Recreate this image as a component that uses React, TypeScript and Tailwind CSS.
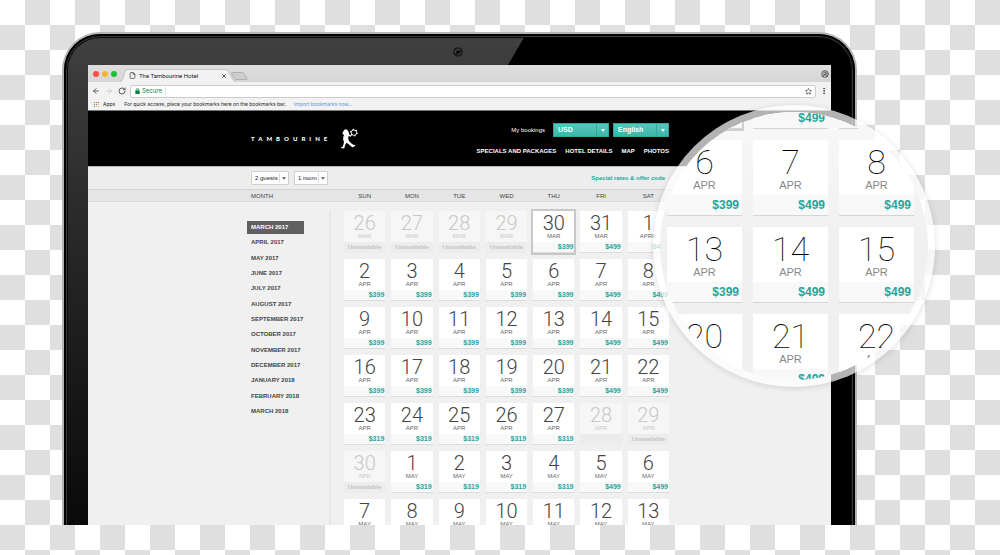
import { ArrowLeft, ArrowRight, CircleUserRound, EllipsisVertical, File, RotateCw, Star, X } from "lucide-react";

type Day = { n?: number; m?: string; price?: string; off?: boolean; selected?: boolean };

const months = [
  "MARCH 2017", "APRIL 2017", "MAY 2017", "JUNE 2017", "JULY 2017", "AUGUST 2017", "SEPTEMBER 2017",
  "OCTOBER 2017", "NOVEMBER 2017", "DECEMBER 2017", "JANUARY 2018", "FEBRUARY 2018", "MARCH 2018",
];

const weekdays = ["SUN", "MON", "TUE", "WED", "THU", "FRI", "SAT"];

const range = (from: number, to: number, make: (n: number) => Day): Day[] =>
  Array.from({ length: to - from + 1 }, (_, i) => make(from + i));

const days: Day[] = [
  ...range(26, 29, (n) => ({ n, m: "MAR", off: true, price: "Unavailable" })),
  { n: 30, m: "MAR", price: "$399", selected: true },
  { n: 31, m: "MAR", price: "$499" },
  { n: 1, m: "APRIL", price: "$499" },
  ...range(2, 22, (n) => ({ n, m: "APR", price: (n - 2) % 7 >= 5 ? "$499" : "$399" })),
  ...range(23, 27, (n) => ({ n, m: "APR", price: "$319" })),
  { n: 28, m: "APR", off: true },
  { n: 29, m: "APR", off: true, price: "Unavailable" },
  { n: 30, m: "APR", off: true, price: "Unavailable" },
  ...range(1, 4, (n) => ({ n, m: "MAY", price: "$319" })),
  ...range(5, 6, (n) => ({ n, m: "MAY", price: "$499" })),
  ...range(7, 13, (n) => ({ n, m: "MAY" })),
];

const zoomedDays: Day[] = [
  { selected: true },
  { price: "$499" },
  {},
  { n: 6, m: "APR", price: "$399" },
  { n: 7, m: "APR", price: "$499" },
  { n: 8, m: "APR", price: "$499" },
  { n: 13, m: "APR", price: "$399" },
  { n: 14, m: "APR", price: "$499" },
  { n: 15, m: "APR", price: "$499" },
  { n: 20 },
  { n: 21, m: "APR", price: "$499" },
  { n: 22, m: "APR" },
];

function DayCell({ day }: { day: Day }) {
  return (
    <button
      type="button"
      disabled={day.off}
      className={`flex h-[42px] flex-col ${day.off ? "bg-[#f6f6f6] text-[#c8c8c8]" : "border-b border-[#dcdcdc] bg-white text-[#444]"} ${day.selected ? "outline-2 outline-[#c8c8c8]" : ""}`}
    >
      <span className="flex h-[31px] w-full flex-col items-center pt-[3px]">
        <span className="font-[Roboto] text-[20px] leading-[19px] font-light">{day.n}</span>
        <span className={`text-[6px] leading-[6px] ${day.off ? "" : "text-[#666]"}`}>{day.m}</span>
      </span>
      <span
        className={`w-full font-bold ${day.off ? "h-[11px] bg-[#ececec] text-center text-[6px] leading-[11px] text-[#c4c4c4]" : "h-[10px] bg-[#f8f8f8] pr-px text-right text-[7px] leading-[10px] text-[#26a69a]"}`}
      >
        {day.price}
      </span>
    </button>
  );
}

function ZoomedCell({ day }: { day: Day }) {
  return (
    <div className={`flex h-[76px] flex-col border-b border-[#d4d4d4] bg-white ${day.selected ? "outline-2 outline-[#cfcfcf]" : ""}`}>
      <div className="flex h-[55px] flex-col items-center pt-[5px]">
        <span className="font-[Roboto] text-[34px] leading-[35px] font-thin text-black">{day.n}</span>
        <span className="text-[11px] leading-[11px] text-[#888]">{day.m}</span>
      </div>
      <div className="grow bg-[#f8f8f8] pr-[3px] text-right text-[12px] leading-[20px] font-bold text-[#26a69a]">{day.price}</div>
    </div>
  );
}

function Caret({ className }: { className: string }) {
  return (
    <svg viewBox="0 0 4 3" className={`pointer-events-none absolute h-[3px] w-[4px] ${className}`} aria-hidden="true">
      <path d="M0 0h4L2 3z" fill="currentColor" />
    </svg>
  );
}

function HeaderSelect({ label, value }: { label: string; value: string }) {
  return (
    <div className="relative w-[56px] text-white">
      <select
        aria-label={label}
        className="block h-[14px] w-full appearance-none border border-[#2fa69b] bg-linear-to-b from-[#55c9bd] to-[#3db5a9] pl-[4px] text-[7px] leading-[12px]"
      >
        <option>{value}</option>
      </select>
      <span className="pointer-events-none absolute top-px right-[12px] h-[12px] w-px bg-[#35a79c]" />
      <Caret className="top-[6px] right-[4px]" />
    </div>
  );
}

function FilterSelect({ label, value, className }: { label: string; value: string; className: string }) {
  return (
    <div className={`relative text-[#222] ${className}`}>
      <select
        aria-label={label}
        className="block h-[14px] w-full appearance-none rounded-[1px] border border-[#cfcfcf] bg-white pl-[3px] text-[6px] leading-[12px]"
      >
        <option>{value}</option>
      </select>
      <span className="pointer-events-none absolute top-[2px] right-[9px] h-[10px] w-px bg-[#ddd]" />
      <Caret className="top-[6px] right-[3px] text-[#777]" />
    </div>
  );
}

function Logo() {
  return (
    <a href="#home" className="flex items-center gap-[10px] text-white">
      <span className="font-[Lato] text-[6px] leading-[8px] font-black tracking-[4px]">TAMBOURINE</span>
      <svg viewBox="302 48 60 69" className="h-[21px] w-[18px]" aria-hidden="true">
        <g fill="currentColor">
          <path d="M311 57c3-4 11-4 14 0l3 5 1 6 7 5-2 4-7-3-1 8 2 8 8 8 8 6 5-1 1 3-8 6-4-1-10-9-8-5-4 7-3 11-6 1-4-3v-3l4 1 3-8 2-9-3-8 1-9 2-6-6-5z" />
          <circle cx="318" cy="59" r="7" />
        </g>
        <circle cx="345" cy="63" r="9" fill="none" stroke="currentColor" strokeWidth="3" />
        <circle cx="345" cy="63" r="11" fill="none" stroke="currentColor" strokeWidth="4" strokeDasharray="5 6.5" />
      </svg>
    </a>
  );
}

function Padlock() {
  return (
    <svg viewBox="0 0 5 6" className="h-[6px] w-[5px] shrink-0 text-[#0b8043]" aria-hidden="true">
      <path d="M1.300 3V1.800a1.200 1.200 0 0 1 2.400 0V3" fill="none" stroke="currentColor" strokeWidth=".8" />
      <rect x=".3" y="2.400" width="4.400" height="3.600" rx=".3" fill="currentColor" />
    </svg>
  );
}

function BrowserChrome() {
  return (
    <div className="border-b border-[#777] bg-[#f2f2f2] text-[#222]">
      <div className="flex h-[17px] items-end bg-linear-to-b from-[#dedede] to-[#d6d6d6] pl-[5px]">
        <div className="flex h-full items-center gap-[3px]">
          <span className="size-[6px] rounded-full bg-[#fc4e48]" />
          <span className="size-[6px] rounded-full bg-[#fdb22b]" />
          <span className="size-[6px] rounded-full bg-[#1dbf35]" />
        </div>
        <div className="relative ml-[3px] flex h-[13px] w-[116px] items-center pr-[9px] pl-[9px]">
          <svg viewBox="0 0 116 13" preserveAspectRatio="none" className="absolute inset-0 size-full" aria-hidden="true">
            <path d="M0 13C4 12 4 1 7 .5H106C110 1 111 12 116 13" fill="#f2f2f2" stroke="#b4b4b4" strokeWidth=".7" />
          </svg>
          <File className="relative mr-[3px] size-[7px] text-[#444]" strokeWidth={2.5} />
          <span className="relative grow font-[Roboto] text-[6px] leading-[8px] whitespace-nowrap">The Tambourine Hotel</span>
          <button type="button" aria-label="Close tab" className="relative">
            <X className="size-[6px]" strokeWidth={3} />
          </button>
        </div>
        <button type="button" aria-label="New tab" className="mb-[2px] -ml-[5px]">
          <svg viewBox="0 0 17 8" className="h-[8px] w-[17px]">
            <path d="M1 .5h10.500q1 0 1.500 1l3 5q.4 1-.8 1H5q-1 0-1.500-1L.6 1.500Q.3.500 1 .5z" fill="#cdcdcd" stroke="#a8a8a8" strokeWidth=".8" />
          </svg>
        </button>
        <CircleUserRound className="mr-[2px] mb-[4px] ml-auto size-[8px] text-[#444]" strokeWidth={2.5} />
      </div>
      <div className="flex h-[18px] items-center pr-[3px] pl-[4px]">
        <ArrowLeft className="size-[8px] text-[#444]" strokeWidth={2.5} />
        <ArrowRight className="ml-[5px] size-[8px] text-[#c4c4c4]" strokeWidth={2.5} />
        <RotateCw className="ml-[5px] size-[8px] text-[#444]" strokeWidth={2.5} />
        <div className="mr-[4px] ml-[4px] flex h-[13px] grow items-center rounded-[2px] border border-[#ccc] bg-white pr-[3px] pl-[4px]">
          <Padlock />
          <label htmlFor="address" className="ml-[2px] border-r border-[#ddd] pr-[3px] font-[Inter] text-[6px] leading-[8px] text-[#0b8043]">
            Secure
          </label>
          <input id="address" type="text" className="min-w-0 grow bg-transparent px-[2px] text-[6px] leading-[8px] outline-none" />
          <Star className="size-[7px] text-[#444]" strokeWidth={2.5} />
        </div>
        <EllipsisVertical className="size-[8px] text-[#444]" strokeWidth={3} />
      </div>
      <div className="flex h-[10px] items-center pb-[2px] pl-[6px] font-[Inter] text-[5px] leading-[8px]">
        <span className="grid grid-cols-3 gap-px" aria-hidden="true">
          <i className="size-[1px] bg-[#e53935]" /><i className="size-[1px] bg-[#e53935]" /><i className="size-[1px] bg-[#e53935]" />
          <i className="size-[1px] bg-[#43a047]" /><i className="size-[1px] bg-[#1e88e5]" /><i className="size-[1px] bg-[#fbc02d]" />
          <i className="size-[1px] bg-[#43a047]" /><i className="size-[1px] bg-[#fbc02d]" /><i className="size-[1px] bg-[#fbc02d]" />
        </span>
        <span className="ml-[4px]">Apps</span>
        <span className="ml-[9px]">For quick access, place your bookmarks here on the bookmarks bar.</span>
        <a href="#import" className="ml-[8px] text-[#5b94e3]">Import bookmarks now...</a>
      </div>
    </div>
  );
}

function HotelPage() {
  return (
    <div className="flex min-h-0 grow flex-col bg-[#f0f0f0]">
      <header className="bg-black">
        <div className="mx-auto flex h-[55px] w-full max-w-[419px] justify-between pl-px">
          <Logo />
          <div className="flex flex-col items-end pt-[12px] font-bold text-white">
            <div className="flex items-center gap-[4px]">
              <a href="#bookings" className="mr-[4px] text-[6px] leading-[8px] font-normal">My bookings</a>
              <HeaderSelect label="Currency" value="USD" />
              <HeaderSelect label="Language" value="English" />
            </div>
            <nav className="mt-[10px] flex gap-[9px] text-[6px] leading-[8px] whitespace-nowrap">
              <a href="#specials">SPECIALS AND PACKAGES</a>
              <a href="#details">HOTEL DETAILS</a>
              <a href="#map">MAP</a>
              <a href="#photos">PHOTOS</a>
            </nav>
          </div>
        </div>
      </header>
      <div className="border-t border-b border-t-[#bbb] border-b-[#d4d4d4] bg-[#ededed]">
        <div className="mx-auto flex h-[22px] w-full max-w-[419px] items-center gap-[5px] pl-px">
          <FilterSelect label="Guests" value="2 guests" className="w-[38px]" />
          <FilterSelect label="Rooms" value="1 room" className="w-[34px]" />
          <a href="#offers" className="mr-[4px] ml-auto text-[6px] leading-[8px] font-bold text-[#26a69a]">Special rates &amp; offer code</a>
        </div>
      </div>
      <div className="border-b border-[#dadada] bg-[#e5e5e5] text-[6px] leading-[12px] text-[#444]">
        <div className="mx-auto flex h-[11px] w-full max-w-[419px]">
          <span className="w-[94px] pl-px">MONTH</span>
          <div className="grid grow grid-cols-7 gap-x-[6px] text-center">
            {weekdays.map((d) => <span key={d}>{d}</span>)}
          </div>
        </div>
      </div>
      <div className="mx-auto flex min-h-0 w-full max-w-[419px] grow pt-[9px]">
        <div className="w-[81px] shrink-0 border-r-2 border-[#e6e6e6] pt-[10px]">
          <ul className="-ml-[3px] flex h-[197px] w-[57px] flex-col justify-between">
            {months.map((m, i) => (
              <li key={m}>
                <a
                  href="#month"
                  className={`block h-[13px] pl-[4px] text-[6px] leading-[13px] font-bold whitespace-nowrap ${i === 0 ? "bg-[#606060] text-white" : "text-[#444]"}`}
                >
                  {m}
                </a>
              </li>
            ))}
          </ul>
        </div>
        <div className="grid grow auto-rows-min grid-cols-7 gap-[6px] pl-[13px]">
          {days.map((d, i) => <DayCell key={i} day={d} />)}
        </div>
      </div>
    </div>
  );
}

export default function App() {
  return (
    <main className="relative flex h-screen flex-col overflow-hidden bg-[repeating-conic-gradient(#dfdfdf_0_25%,#ffffff_0_50%)] bg-[length:50px_50px] bg-[position:0_0] pt-8 pr-[143px] pb-[30px] pl-[62px] font-['Liberation_Sans',sans-serif]">
      <div className="relative flex min-h-0 grow flex-col overflow-hidden rounded-t-[38px] border-2 border-b-0 border-[#b4b4b4] bg-black px-[24px] pt-[31px]">
        <div className="absolute inset-0 rounded-t-[36px] bg-linear-to-b from-[#404040] to-[#0a0a0a] [clip-path:polygon(0_0,462px_0,444px_31px,24px_31px,24px_100%,0_100%)]" />
        <div className="pointer-events-none absolute inset-x-0 top-0 -bottom-2 rounded-t-[36px] border-2 border-black shadow-[inset_0_0_0_1px_#3a3a3a,inset_0_0_0_2px_#0a0a0a]" />
        <svg viewBox="0 0 10 10" className="absolute top-[13px] left-[389px] size-[10px]" aria-hidden="true">
          <circle cx="5" cy="5" r="4.800" fill="#1c1c1c" />
          <path d="M2.500 5.500A2.500 2.500 0 0 1 7 3.500M7.300 5.500A2.400 2.400 0 0 1 5 7.500" fill="none" stroke="#5a5a5a" strokeWidth=".9" />
          <circle cx="5.200" cy="5.200" r="1.200" fill="#050505" />
        </svg>
        <div className="relative flex min-h-0 grow flex-col overflow-hidden">
          <BrowserChrome />
          <HotelPage />
        </div>
      </div>
      <div className="absolute top-[105px] right-[65px] size-[282px] rounded-full bg-white/70 p-[7px] shadow-[0_1px_6px_rgba(0,0,0,0.14)]">
        <div className="flex size-full justify-center overflow-hidden rounded-full bg-linear-to-b from-[#f8f8f8] via-[#f0f0f0] to-[#f0f0f0]">
          <div className="-mt-[59px] -ml-[7px] grid w-[247px] shrink-0 auto-rows-min grid-cols-3 gap-[11px]">
            {zoomedDays.map((d, i) => <ZoomedCell key={i} day={d} />)}
          </div>
        </div>
      </div>
    </main>
  );
}
